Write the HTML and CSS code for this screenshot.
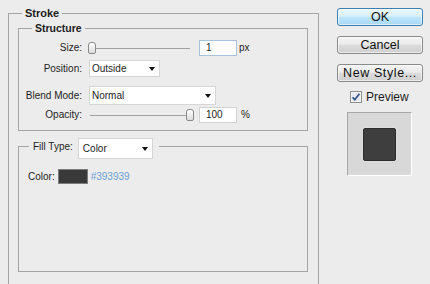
FILE: index.html
```html
<!DOCTYPE html>
<html>
<head>
<meta charset="utf-8">
<link rel="stylesheet" href="styles.css">
</head>
<body>
<div class="dialog">
  <fieldset class="group stroke">
    <legend class="title">Stroke</legend>
    <fieldset class="group structure">
      <legend class="subtitle">Structure</legend>
      <div class="row row-size">
        <span class="lbl">Size:</span>
        <div class="slider"><span class="thumb" style="margin-left:0px"></span></div>
        <div class="num num-focus">1</div>
        <span class="unit">px</span>
      </div>
      <div class="row row-pos">
        <span class="lbl">Position:</span>
        <div class="select sel-pos"><span>Outside</span><i class="arrow"></i></div>
      </div>
      <div class="row row-blend">
        <span class="lbl">Blend Mode:</span>
        <div class="select sel-blend"><span>Normal</span><i class="arrow"></i></div>
      </div>
      <div class="row row-opacity">
        <span class="lbl">Opacity:</span>
        <div class="slider"><span class="thumb" style="margin-left:98px"></span></div>
        <div class="num">100</div>
        <span class="unit pct">%</span>
      </div>
    </fieldset>
    <fieldset class="group fill">
      <legend class="fill-legend">
        <span class="ft-label">Fill Type:</span>
        <div class="select sel-fill"><span>Color</span><i class="arrow"></i></div>
      </legend>
      <div class="fill-body">
        <div class="color-row">
          <span class="color-lbl">Color:</span>
          <span class="swatch"></span>
          <span class="hex">#393939</span>
        </div>
      </div>
    </fieldset>
  </fieldset>
  <div class="side">
    <div class="btn btn-ok">OK</div>
    <div class="btn btn-gray">Cancel</div>
    <div class="btn btn-gray btn-new">New Style...</div>
    <div class="check-row">
      <svg class="check" width="12" height="12" viewBox="0 0 12 12">
        <rect x="0.5" y="0.5" width="11" height="11" fill="#f4f4f4" stroke="#8e8f8f"/>
        <rect x="2" y="2" width="8" height="8" fill="#e6e9ee"/>
        <path d="M2.6 6.2 L4.8 8.8 L9.4 2.8" fill="none" stroke="#2c4c86" stroke-width="1.6"/>
      </svg>
      <span class="check-lbl">Preview</span>
    </div>
    <div class="preview"><div class="preview-swatch"></div></div>
  </div>
</div>
</body>
</html>
```

FILE: styles.css
```css
* { box-sizing: border-box; }
html, body { margin: 0; padding: 0; }
body {
  width: 430px;
  height: 284px;
  overflow: hidden;
  background: #ececec;
  font-family: "Liberation Sans", Arial, sans-serif;
  font-size: 10px;
  color: #1c1c1c;
}
.dialog {
  display: flex;
  align-items: flex-start;
  height: 284px;
  overflow: hidden;
  padding-left: 8px;
}
.group {
  border: 1px solid #a4a4a4;
  margin: 0;
  padding: 0;
  min-width: 0;
}
.stroke {
  width: 311px;
  height: 278px;
  margin-top: 7px;
  padding: 3px 10px 0 9px;
}
.title {
  font-weight: bold;
  font-size: 11px;
  line-height: 12px;
  padding: 0 3px;
  margin-left: 4px;
}
.structure {
  width: 290px;
  padding: 6px 0 7px 0;
}
.subtitle {
  font-weight: bold;
  font-size: 10.5px;
  line-height: 12px;
  padding: 0 3px;
  margin-left: 13px;
}
.row {
  display: flex;
  align-items: center;
}
.lbl {
  width: 63px;
  text-align: right;
  margin-right: 6px;
  line-height: 12px;
}
.row-size { height: 16px; }
.row-pos { height: 17px; margin-top: 4px; }
.row-blend { height: 19px; margin-top: 9px; }
.row-opacity { height: 16px; margin-top: 2px; }
.slider {
  width: 107px;
  height: 12px;
  display: flex;
  align-items: center;
  background: linear-gradient(#a0a0a0, #a0a0a0) no-repeat 2px 6px / 100px 1px;
}
.thumb {
  width: 8px;
  height: 12px;
  border: 1px solid #8a8a8a;
  border-radius: 3px 3px 2px 2px;
  background: linear-gradient(#ffffff, #dcdcdc);
}
.num {
  width: 38px;
  height: 16px;
  margin-left: 4px;
  background: #fff;
  border: 1px solid #d2d2d2;
  padding-left: 6px;
  line-height: 14px;
}
.num-focus { border-color: #a7c2dc; }
.unit { margin-left: 2px; line-height: 12px; }
.pct { margin-left: 4px; }
.select {
  display: flex;
  align-items: center;
  justify-content: space-between;
  background: #fff;
  border: 1px solid #d6d6d6;
  padding: 0 4px 0 2px;
  font-size: 10px;
}
.arrow {
  width: 0;
  height: 0;
  border-top: 4px solid #111;
  border-left: 3.5px solid transparent;
  border-right: 3.5px solid transparent;
}
.sel-pos { width: 71px; height: 17px; margin-left: 1px; }
.sel-blend { width: 127px; height: 19px; margin-left: 1px; }
.fill {
  width: 290px;
  margin-top: 7px;
}
.fill-legend {
  display: flex;
  align-items: flex-start;
  margin-left: 10px;
  padding: 0 6px 0 4px;
}
.ft-label {
  line-height: 12px;
  margin-top: 3px;
  margin-right: 5px;
}
.sel-fill {
  width: 75px;
  height: 21px;
  margin-bottom: -5px;
  padding-left: 4px;
}
.fill-body {
  height: 117px;
  padding: 15px 0 0 9px;
}
.color-row {
  display: flex;
  align-items: center;
}
.swatch {
  width: 30px;
  height: 15px;
  margin-left: 3px;
  background: #393939;
  border: 1px solid #7c7c7c;
}
.hex {
  margin-left: 3px;
  color: #6b9fd4;
}
.side {
  width: 86px;
  margin-left: 18px;
  display: flex;
  flex-direction: column;
}
.btn {
  height: 18px;
  border-radius: 3px;
  display: flex;
  align-items: center;
  justify-content: center;
  font-size: 12.5px;
  color: #111;
  margin-top: 10px;
}
.btn-ok {
  margin-top: 8px;
  border: 1px solid #3c7fb1;
  background: linear-gradient(#eaf6fd 0%, #d9f0fc 45%, #bee6fd 50%, #a7d9f5 100%);
  box-shadow: inset 0 0 0 1px rgba(255,255,255,0.6);
}
.btn-gray {
  border: 1px solid #8a8a8a;
  background: linear-gradient(#f4f4f4 0%, #ebebeb 45%, #dddddd 50%, #cfcfcf 100%);
  box-shadow: inset 0 0 0 1px rgba(255,255,255,0.6);
}
.btn-new { letter-spacing: 0.6px; }
.check-row {
  display: flex;
  align-items: center;
  height: 14px;
  margin-top: 8px;
  padding-left: 13px;
}
.check { display: block; }
.check-lbl {
  margin-left: 4px;
  font-size: 12px;
}
.preview {
  width: 65px;
  height: 64px;
  margin-top: 8px;
  margin-left: 10px;
  background: #d8d8d8;
  border-top: 1px solid #a8a8a8;
  border-left: 1px solid #a8a8a8;
  border-right: 1px solid #fff;
  border-bottom: 1px solid #fff;
  padding: 15px 0 0 15px;
}
.preview-swatch {
  width: 33px;
  height: 33px;
  background: #3e3e3e;
  border: 1px solid #2c2c2c;
  border-radius: 2px;
  box-shadow: 0 0 2px rgba(255,255,255,0.5);
}
```
